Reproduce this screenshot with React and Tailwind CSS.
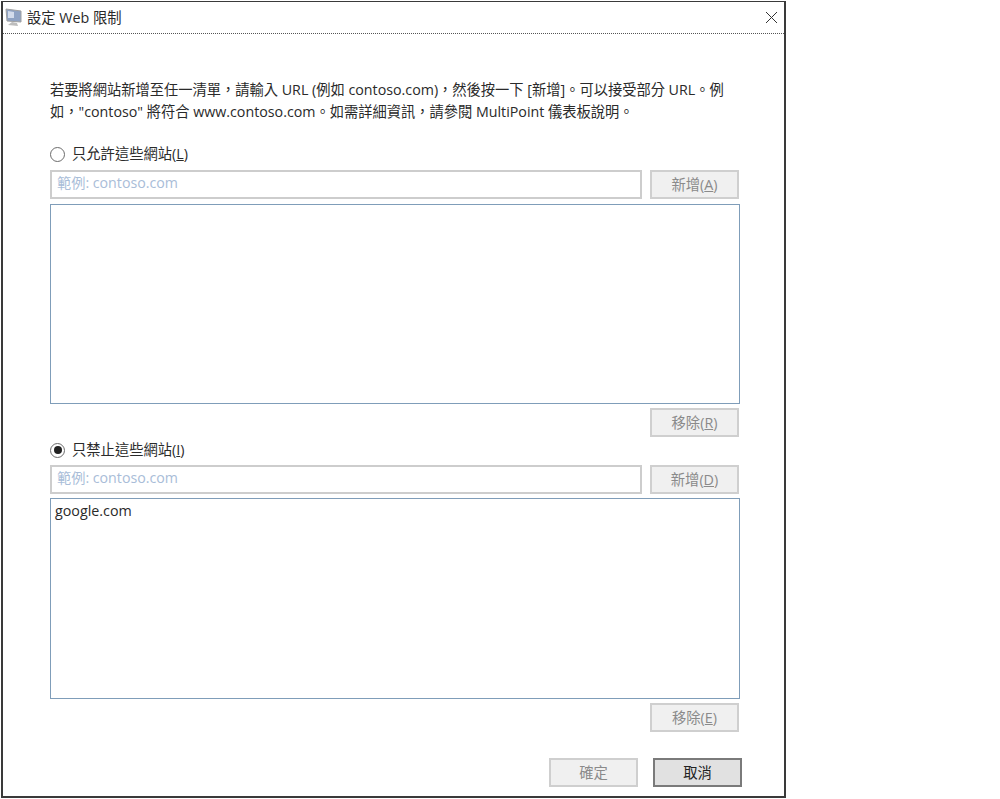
import React from "react";

function Btn({ children, className = "" }) {
  return (
    <div className={"w-[89px] h-[29px] shrink-0 flex items-center justify-center border-2 border-[#cfcfcf] bg-[#f0f0f0] text-[#8a8a8a] text-[14.3px] " + className}>
      {children}
    </div>
  );
}

function Radio({ checked }) {
  return (
    <div className="w-[15px] h-[15px] rounded-full border border-[#6b6b6b] bg-white flex items-center justify-center shrink-0">
      {checked && <div className="w-[8px] h-[8px] rounded-full bg-[#222]" />}
    </div>
  );
}

function InputRow({ u }) {
  return (
    <div className="flex gap-[8px] w-[689px]">
      <div className="w-[592px] h-[29px] border-2 border-[#cdcdcd] flex items-center pl-[5px] pb-[3px] text-[#a9bdd8] text-[14.2px]">
        範例: contoso.com
      </div>
      <Btn>新增(<span className="underline">{u}</span>)</Btn>
    </div>
  );
}

export default function App() {
  return (
    <div className="w-[1000px] h-[799px] bg-white font-['Open_Sans','Noto_Sans_CJK_TC',sans-serif] text-[#2a2a2a] overflow-hidden">
      <div className="ml-[1px] mt-[1px] w-[785px] h-[797px] border-2 border-t border-[#3a3a3a] flex flex-col">
        <div className="h-[33px] border-b border-dotted border-[#555] flex items-center pl-[2px] shrink-0 mt-[-1px]">
          <svg width="18" height="19" viewBox="0 0 18 19" className="shrink-0">
            <path d="M1 1 L16 3 L16 14 L2 13 Z" fill="#8fa3c4" stroke="#a0a0a0" />
            <path d="M3 3 L9 4 L9 10 L3 10 Z" fill="#d3dcec" />
            <path d="M7 14 L12 15 L13 18 L3 17 Z" fill="#bdbdbd" />
          </svg>
          <span className="ml-[4px] mt-[2px] text-[14.3px]">設定 Web 限制</span>
          <svg width="13" height="13" viewBox="0 0 13 13" className="ml-auto mr-[6px]">
            <path d="M1 1 L12 12 M12 1 L1 12" stroke="#333" strokeWidth="1" fill="none" />
          </svg>
        </div>
        <div className="pl-[47px] flex flex-col">
          <div className="mt-[45px] w-[690px] text-[14.25px] leading-[22px] h-[44px]">
            <div className="whitespace-nowrap">若要將網站新增至任一清單，請輸入 URL (例如 contoso.com)，然後按一下 [新增]。可以接受部分 URL。例</div>
            <div className="whitespace-nowrap">如，"contoso" 將符合 www.contoso.com。如需詳細資訊，請參閱 MultiPoint 儀表板說明。</div>
          </div>
          <div className="mt-[21px] h-[20px] flex items-center gap-[7px]">
            <Radio />
            <span className="text-[14.3px]">只允許這些網站(<span className="underline">L</span>)</span>
          </div>
          <div className="mt-[6px]"><InputRow u="A" /></div>
          <div className="mt-[5px] w-[690px] h-[200px] border border-[#7f9db9]" />
          <Btn className="mt-[4px] ml-[600px]">移除(<span className="underline">R</span>)</Btn>
          <div className="mt-[3px] h-[20px] flex items-center gap-[7px]">
            <Radio checked />
            <span className="text-[14.3px]">只禁止這些網站(<span className="underline">I</span>)</span>
          </div>
          <div className="mt-[5px]"><InputRow u="D" /></div>
          <div className="mt-[4px] w-[690px] h-[201px] border border-[#7f9db9] px-[4px] text-[14.3px] leading-[24px]">google.com</div>
          <Btn className="mt-[4px] ml-[600px]">移除(<span className="underline">E</span>)</Btn>
          <div className="mt-[26px] flex gap-[15px] ml-[499px]">
            <Btn>確定</Btn>
            <div className="w-[89px] h-[29px] flex items-center justify-center border-2 border-[#7a7a7a] bg-[#e1e1e1] text-[#222] text-[14.3px]">取消</div>
          </div>
        </div>
      </div>
    </div>
  );
}
